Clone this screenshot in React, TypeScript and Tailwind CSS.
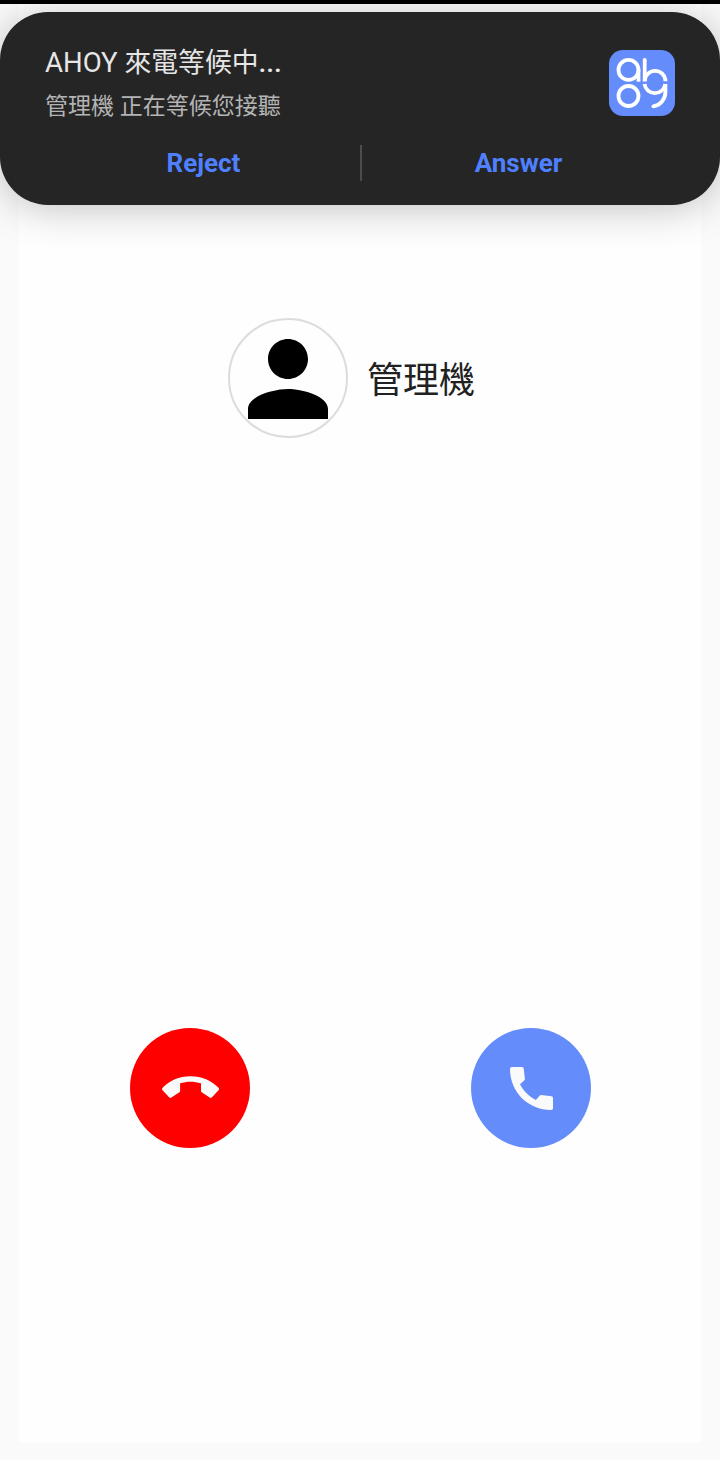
import type { ReactNode } from 'react';

const FONT = "font-['Roboto','Noto_Sans_CJK_TC',sans-serif]";

const AppLogo = () => (
    <svg viewBox="0 0 66 66" className="size-[66px] shrink-0" fill="none" stroke="#fff" strokeWidth="3.8">
        <rect width="66" height="66" rx="14" fill="#648cfa" stroke="none" />
        <circle cx="19.5" cy="19.9" r="10" />
        <path d="M29.5 20v11.7" />
        <circle cx="19.5" cy="46" r="10" />
        <path d="M35.7 9.9v21.5" />
        <circle cx="35.7" cy="9.9" r="1.9" fill="#fff" stroke="none" />
        <path d="M35.7 31.3a10.4 10.4 0 0 1 20.8 0" />
        <path d="M35.5 34.1a10.5 10.5 0 0 0 20.8 0" />
        <path d="M56.4 34.1v8a14.2 14.2 0 0 1-12 14.2" />
        <circle cx="44.4" cy="56.3" r="1.9" fill="#fff" stroke="none" />
    </svg>
);

const PersonIcon = () => (
    <svg viewBox="0 0 24 24" className="mt-0.5 size-[120px] shrink-0" fill="#000">
        <path d="M12 12c2.21 0 4-1.79 4-4s-1.79-4-4-4-4 1.79-4 4 1.79 4 4 4zm0 2c-2.67 0-8 1.34-8 4v2h16v-2c0-2.66-5.33-4-8-4z" />
    </svg>
);

const HangUpIcon = () => (
    <svg viewBox="0 0 57 22" className="-mt-0.5 h-[22px] w-[57px]" fill="#fafafa">
        <path d="M28.5 .2C17 .2 7.5 4.6 .6 11.7a2 2 0 0 0 0 2.6l6.5 7a1.8 1.8 0 0 0 2.3 .2l8-5.3a1.5 1.5 0 0 0 .7-1.3V7.3C24.5 5.2 32.5 5.2 39 7.3v7.6a1.5 1.5 0 0 0 .7 1.3l8 5.3a1.8 1.8 0 0 0 2.3-.2l6.5-7a2 2 0 0 0 0-2.6C49.5 4.6 40 .2 28.5 .2z" />
    </svg>
);

const PhoneIcon = () => (
    <svg viewBox="0 0 43 43" className="ml-px mt-px size-[43px]" fill="#fafafa">
        <path d="M2 0h9.9a1.8 1.8 0 0 1 1.8 1.6l1.2 10.2a1.8 1.8 0 0 1-.5 1.4L10 17.3C13.4 24 19 29.5 25.9 33l3.9-4.4a1.8 1.8 0 0 1 1.5-.5l10.1 1.1a1.8 1.8 0 0 1 1.6 1.8v10.2a1.8 1.8 0 0 1-1.8 1.8C18 43 0 25 0 2a2 2 0 0 1 2-2z" />
    </svg>
);

type CallButtonProps = {
    label: string;
    className: string;
    children: ReactNode;
};

const CallButton = ({ label, className, children }: CallButtonProps) => (
    <button aria-label={label} className={`flex size-[120px] items-center justify-center rounded-full ${className}`}>
        {children}
    </button>
);

const CallNotification = () => (
    <div className="absolute inset-x-0 top-3 h-[193px] rounded-[48px] bg-[#252525] shadow-[0_4px_40px_rgba(0,0,0,0.24)]">
        <div className="flex h-[133px] items-start justify-between px-[45px] pt-[38px]">
            <div>
                <p className="-mt-[3px] text-[26.8px] leading-8 text-[#e6e6e6]">
                    <span className="text-[27.6px]">AHOY </span>
                    來電等候中
                    <span className="text-[28px] font-medium">...</span>
                </p>
                <p className="mt-3 text-[23px] leading-8 text-[#b4b4b4]">管理機 正在等候您接聽</p>
            </div>
            <AppLogo />
        </div>
        <div className="flex h-9 items-center text-[26px] font-bold text-[#4f80ff]">
            <button className="flex-1 pl-[47px]">Reject</button>
            <div className="h-9 w-0.5 bg-[#4c4c4c]" />
            <button className="flex-1 pr-[45px]">Answer</button>
        </div>
    </div>
);

export default function App() {
    return (
        <div className={`relative h-[1460px] w-[720px] overflow-hidden bg-[#fafafa] ${FONT}`}>
            <div className="flex h-full flex-col px-[19px] pb-[17px]">
                <div className="flex flex-1 flex-col rounded-sm bg-[#fefefe]">
                    <div className="mt-[318px] flex items-center gap-[19px] pl-[209px]">
                        <div className="flex size-[120px] items-center justify-center rounded-full border-2 border-[#dcdcdc]">
                            <PersonIcon />
                        </div>
                        <span className="pt-1.5 text-[36px] text-[#212121]">管理機</span>
                    </div>
                    <div className="mt-[590px] flex justify-between pl-[111px] pr-[110px]">
                        <CallButton label="Reject" className="bg-[#ff0000]">
                            <HangUpIcon />
                        </CallButton>
                        <CallButton label="Answer" className="bg-[#648cfa]">
                            <PhoneIcon />
                        </CallButton>
                    </div>
                </div>
            </div>
            <CallNotification />
            <div className="absolute inset-x-0 top-0 h-1 bg-black" />
        </div>
    );
}
